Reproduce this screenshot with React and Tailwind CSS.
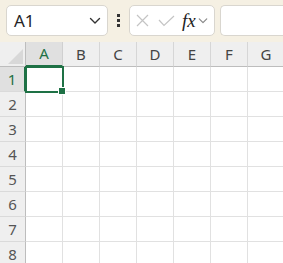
import React from "react";

const cols = ["A", "B", "C", "D", "E", "F", "G"];
const rows = [1, 2, 3, 4, 5, 6, 7, 8];

function Chevron({ className }) {
  return (
    <svg className={className} width="12" height="8" viewBox="0 0 12 8" fill="none">
      <path d="M1.5 1.5 L6 6 L10.5 1.5" stroke="currentColor" strokeWidth="1.4" strokeLinecap="round" strokeLinejoin="round" />
    </svg>
  );
}

export default function App() {
  return (
    <div
      className="w-[283px] h-[263px] overflow-hidden bg-white"
      style={{ fontFamily: '"Noto Sans", "Open Sans", sans-serif' }}
    >
      {/* toolbar */}
      <div className="h-[42px] bg-[#f5f0e3] flex items-start pt-[5px] pl-[6px] gap-0">
        <div className="w-[102px] h-[31px] bg-white border border-[#d9d6cf] rounded-[5px] flex items-center pl-[7px] pr-[6px]">
          <span className="text-[17px] text-[#262626] leading-none flex-1">A1</span>
          <Chevron className="text-[#333]" />
        </div>
        <div className="w-[21px] h-[31px] flex flex-col items-center justify-center gap-[2px]">
          <span className="w-[3px] h-[3px] bg-[#333] block" />
          <span className="w-[3px] h-[3px] bg-[#333] block" />
          <span className="w-[3px] h-[3px] bg-[#333] block" />
        </div>
        <div className="w-[86px] h-[31px] bg-white border border-[#d9d6cf] rounded-[5px] flex items-center pl-[6px]">
          <svg width="13" height="13" viewBox="0 0 13 13" fill="none">
            <path d="M1 1 L12 12 M12 1 L1 12" stroke="#c4c4c4" strokeWidth="1.2" />
          </svg>
          <svg className="ml-[9px]" width="17" height="12" viewBox="0 0 17 12" fill="none">
            <path d="M1 5 L6 10.5 L16 1" stroke="#c4c4c4" strokeWidth="1.2" />
          </svg>
          <span
            className="ml-[7px] text-[19px] italic text-[#222] leading-none"
            style={{ fontFamily: '"Liberation Serif", "DejaVu Serif", serif' }}
          >
            fx
          </span>
          <Chevron className="ml-[2px] text-[#888] w-[10px]" />
        </div>
        <div className="ml-[5px] flex-1 h-[31px] bg-white border border-[#d9d6cf] rounded-l-[5px] border-r-0" />
      </div>

      {/* header row */}
      <div className="flex h-[25px]">
        <div className="w-[26px] shrink-0 bg-[#efefef] border-r border-b border-[#bdbdbd] relative">
          <svg className="absolute right-[2px] bottom-[2px]" width="15" height="15" viewBox="0 0 15 15">
            <path d="M15 0 L15 15 L0 15 Z" fill="#d8d8d8" />
          </svg>
        </div>
        {cols.map((c, i) => (
          <div
            key={c}
            className={
              "w-[37px] shrink-0 flex items-center justify-center text-[15px] border-r " +
              (i === 0
                ? "bg-[#e0e0e0] text-[#1e7145] border-r-[#d0d0d0] border-b-2 border-b-[#1e7145]"
                : "bg-[#efefef] text-[#444] border-r-[#d6d6d6] border-b border-b-[#bdbdbd]")
            }
          >
            {c}
          </div>
        ))}
      </div>

      {/* rows */}
      {rows.map((r) => (
        <div key={r} className="flex h-[25px]">
          <div
            className={
              "w-[26px] shrink-0 flex items-center justify-center text-[15px] border-b border-b-[#dadada] border-r " +
              (r === 1
                ? "bg-[#e0e0e0] text-[#1e7145] border-r-2 border-r-[#1e7145]"
                : "bg-[#efefef] text-[#555] border-r-[#bdbdbd]")
            }
          >
            {r}
          </div>
          {cols.map((c, i) => (
            <div
              key={c}
              className="w-[37px] shrink-0 border-r border-b border-[#e1e1e1] relative"
            >
              {r === 1 && i === 0 && (
                <div className="absolute left-[-1px] top-[-1px] w-[39px] h-[27px] border-2 border-[#1e7145] z-10">
                  <div className="absolute right-[-4px] bottom-[-4px] w-[6px] h-[6px] bg-[#1e7145] border border-white box-content" />
                </div>
              )}
            </div>
          ))}
        </div>
      ))}
    </div>
  );
}
